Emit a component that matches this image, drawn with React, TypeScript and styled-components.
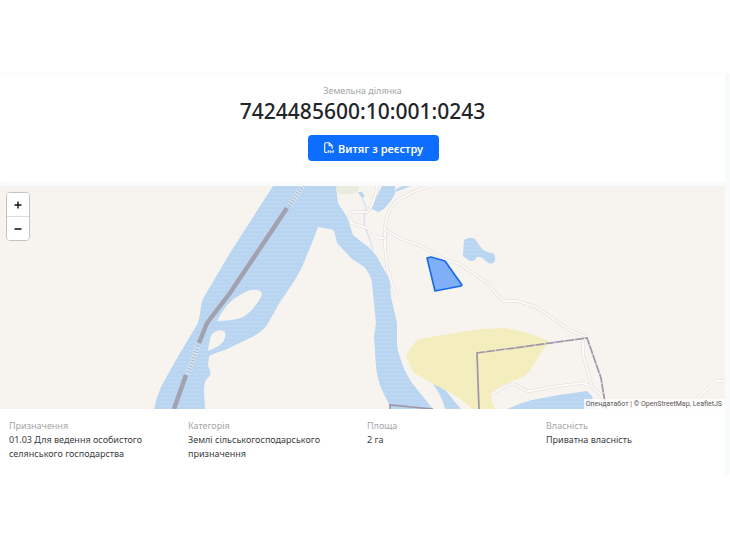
import React from "react";
import styled, { createGlobalStyle } from "styled-components";

const GlobalStyle = createGlobalStyle`
  *, *::before, *::after { box-sizing: border-box; }
  body { margin: 0; background: #fff; color: #212529; font-family: "Noto Sans", "Open Sans", sans-serif; }
`;

const Page = styled.main`
  display: flex;
  flex-direction: column;
  gap: 4px;
  margin-top: 73px;
  padding: 1px 5px 0 0;
  background: #f9fafc;
`;

const Header = styled.header`
  display: flex;
  flex-direction: column;
  align-items: center;
  padding: 9px 0 21px;
  background: #fff;
  border-radius: 0 0 3px 3px;
`;

const Caption = styled.span`
  color: #a3a5a7;
  font-size: 9px;
  line-height: 15px;
`;

const Title = styled.h1`
  margin: 0;
  font-size: 21px;
  font-weight: 500;
  line-height: 26px;
`;

const ExtractButton = styled.button`
  display: flex;
  align-items: center;
  gap: 3px;
  margin: 11px 0 0 22px;
  padding: 0 16px;
  height: 26px;
  border: 0;
  border-radius: 4px;
  background: #0d6efd;
  color: #fff;
  font: 600 11px "Noto Sans", "Open Sans", sans-serif;
  cursor: pointer;
`;

const Parcel = styled.section`
  background: #fff;
`;

const MapFrame = styled.div`
  position: relative;
  overflow: hidden;
  background: #f7f4ef;
`;

const MapDrawing = styled.svg`
  display: block;
  width: 100%;
  height: auto;
`;

const ZoomControl = styled.div`
  position: absolute;
  top: 6px;
  left: 6px;
  display: flex;
  flex-direction: column;
  border: 1px solid #c4c3c1;
  border-radius: 4px;
  overflow: hidden;
  background: #fff;
`;

const ZoomButton = styled.button`
  display: grid;
  place-items: center;
  width: 22px;
  height: 23px;
  padding: 0;
  border: 0;
  background: #fff;
  color: #111;
  cursor: pointer;

  & + & { height: 24px; border-top: 1px solid #ddd; }
`;

const Attribution = styled.div`
  position: absolute;
  right: 0;
  bottom: 0;
  padding: 0 3px 0 2px;
  background: rgba(255, 255, 255, 0.8);
  color: #555;
  font: 7px/10px Roboto, Arial, sans-serif;
  white-space: nowrap;

  a { color: inherit; text-decoration: none; }
`;

const Details = styled.dl`
  display: grid;
  grid-template-columns: repeat(4, 1fr);
  margin: 0;
  padding: 9px 0 13px 9px;
`;

const Detail = styled.div`
  padding-right: 16px;
  font-size: 9px;

  dt { color: #a3a5a7; line-height: 15px; }
  dd { margin: 0; color: #3a3e42; line-height: 14px; }
`;

const DETAILS = [
  { label: "Призначення", value: "01.03 Для ведення особистого селянського господарства" },
  { label: "Категорія", value: "Землі сільськогосподарського призначення" },
  { label: "Площа", value: "2 га" },
  { label: "Власність", value: "Приватна власність" },
];

const ROADS = [
  "M430 0C414 5 399 12 393 19C387 27 385 34 385 44L385 61L387 82L392 98L397 110",
  "M377 0C377 6 374 14 371 21L367 26C360 27 353 23 350 28L351 37L367 42L371 43C375 52 381 54 385 51",
  "M385 44L394 49C404 56 414 56 423 61L446 74L460 78L471 86L490 99L496 108L504 115L517 115L536 121L571 145L587 151",
  "M583 154L583 168L588 187L592 201L600 208L605 217",
  "M492 208C500 204 506 198 513 198C520 199 523 206 530 205L558 200L583 197L592 201",
  "M695 215L716 195L725 195",
];

const DocumentIcon = () => (
  <svg width="11" height="12" viewBox="0 0 11 12" fill="none" stroke="#fff" aria-hidden="true">
    <path d="M3 10.5H1.7Q.7 10.5.7 9.5V1.7Q.7.7 1.7.7H5.2L8.2 3.7V7M5.2.7V3.7H8.2" strokeWidth="1.1" />
    <path d="M4 11V8.7H4.9V10H4M6.2 8.7V10.8H6.8L7.2 10.3V9.2L6.8 8.7ZM8.8 11V8.7H10.3M8.8 9.8H10" strokeWidth=".8" />
  </svg>
);

const ParcelMap = () => (
  <MapDrawing viewBox="0 0 725 223" role="img" aria-label="Карта земельної ділянки">
    <defs>
      <pattern id="water" width="6" height="4" patternUnits="userSpaceOnUse">
        <rect width="6" height="4" fill="#bcd7f1" />
        <path d="M0 2Q1.5 1 3 2T6 2" fill="none" stroke="#b4d0ee" strokeWidth=".7" />
      </pattern>
    </defs>
    <rect width="725" height="223" fill="#f7f4ef" />
    <path d="M336 0H359L358 5Q353 9 338 8Z" fill="#e9ebdc" />
    <g fill="url(#water)">
      <path
        fillRule="evenodd"
        d="M273 0L230 67L204 111Q201 116 200 128L198 137L180 167L163 197Q157 209 154 223H205L204 206Q204 197 206 194Q212 189 210 185L208 180L209 170Q215 167 225 164L250 152Q262 146 267 139L280 116Q295 95 302 81L312 57L318 41L329 43Q334 43 335 48L337 57L352 73L363 80Q370 86 372 97L376 137L374 151L376 181Q378 196 382 204L391 223H433L412 197Q403 183 401 174Q397 164 397 157V137L391 111L390 94L377 71Q371 62 363 57L353 49L347 31L338 17L336 0ZM217 135Q226 116 240 109Q252 101 260 105Q263 107 261 111Q253 125 243 131Q234 135 217 135ZM208 165Q210 149 213 147Q220 142 225 146Q227 155 217 161Z"
      />
      <path d="M382 0H395V8Q386 24 378 26L372 23V20Z" />
      <path d="M395 6L411 0H403L396 3ZM358 6H362Q365 9 364 12L360 10Z" />
      <path d="M464 54Q470 50 475 53L482 63Q487 67 493 67Q496 70 495 75Q492 80 487 76Q481 70 477 71Q474 77 468 74L463 70Z" />
      <path d="M433 198L443 201Q453 214 461 223H445Q443 212 433 198Z" />
      <path d="M507 223Q518 218 532 214L559 209L587 205L592 210L595 223Z" />
    </g>
    <path d="M419 153L480 143L505 142Q528 146 549 155Q540 168 533 180Q528 190 516 194Q499 199 491 208Q491 216 495 223H473Q457 209 441 202L414 187L406 171Q410 160 419 153Z" fill="#f4edbd" />
    <path d="M362 12L366 21Q362 34 366 43L370 54L373 64" fill="none" stroke="#c9dcee" strokeWidth="1" />
    {ROADS.map((d) => (
      <g key={d} fill="none" strokeLinejoin="round">
        <path d={d} stroke="#dddcda" strokeWidth="3" />
        <path d={d} stroke="#fbfaf8" strokeWidth="2" />
      </g>
    ))}
    <path d="M287 22L230 107L207 137L199 157M186 189L174 223" fill="none" stroke="#a2a1b0" strokeWidth="4.5" />
    <g fill="none" strokeWidth="5">
      <path d="M289 20L303 0M198 160L188 188" stroke="#d3e2f1" />
      <path d="M289 20L303 0M198 160L188 188" stroke="#acb9c9" strokeWidth="4" strokeDasharray="1 2" />
    </g>
    <g fill="none" stroke="#9f96a8" strokeWidth="1.7">
      <path d="M479 223L477 167L587 152L601 192L606 223M390 223V219L433 223" />
      <path d="M477 167L587 152L601 192L606 223" stroke="#eee9e5" strokeDasharray="1 9" strokeDashoffset="-18" />
    </g>
    <path d="M427 72L431 71L445 75L462 99L461 100L435 105Z" fill="#80aef8" stroke="#1769e8" strokeWidth="1.6" strokeLinejoin="round" />
  </MapDrawing>
);

export default function App() {
  return (
    <>
      <GlobalStyle />
      <Page>
        <Header>
          <Caption>Земельна ділянка</Caption>
          <Title>7424485600:10:001:0243</Title>
          <ExtractButton type="button">
            <DocumentIcon />
            Витяг з реєстру
          </ExtractButton>
        </Header>
        <Parcel>
          <MapFrame>
            <ParcelMap />
            <ZoomControl>
              <ZoomButton type="button" aria-label="Збільшити">
                <svg width="8" height="8" viewBox="0 0 8 8" stroke="currentColor" strokeWidth="1.4"><path d="M4 .5V7.5M.5 4H7.5" /></svg>
              </ZoomButton>
              <ZoomButton type="button" aria-label="Зменшити">
                <svg width="8" height="8" viewBox="0 0 8 8" stroke="currentColor" strokeWidth="1.4"><path d="M0.5 4H7.5" /></svg>
              </ZoomButton>
            </ZoomControl>
            <Attribution>
              <a href="#opendatabot">Опендатабот</a> | © <a href="#osm">OpenStreetMap</a>, <a href="#leaflet">LeafletJS</a>
            </Attribution>
          </MapFrame>
          <Details>
            {DETAILS.map(({ label, value }) => (
              <Detail key={label}>
                <dt>{label}</dt>
                <dd>{value}</dd>
              </Detail>
            ))}
          </Details>
        </Parcel>
      </Page>
    </>
  );
}
